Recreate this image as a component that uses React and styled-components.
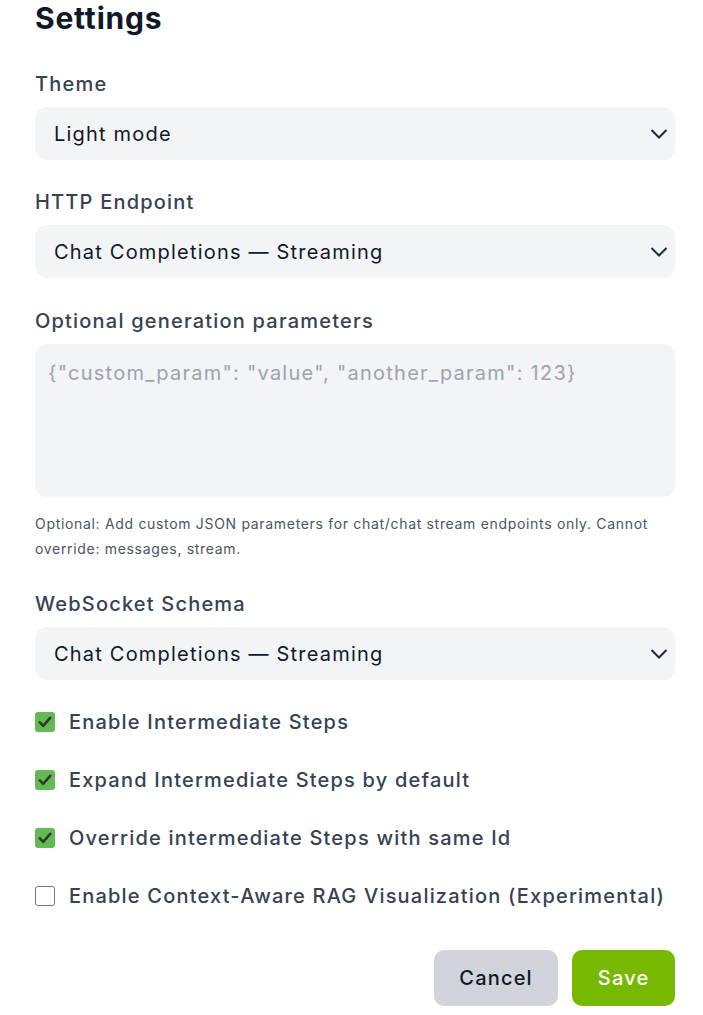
import styled, { createGlobalStyle } from "styled-components";

const GlobalStyle = createGlobalStyle`
  html, body {
    margin: 0;
    padding: 0;
    background: #ffffff;
  }
  body {
    font-family: Inter, "Noto Sans", "Liberation Sans", sans-serif;
  }
  * {
    box-sizing: border-box;
  }
`;

const Page = styled.div`
  width: 640px;
  margin-left: 35px;
  display: flex;
  flex-direction: column;
`;

const Title = styled.h1`
  margin: 0;
  font-size: 30px;
  line-height: 36px;
  font-weight: 700;
  letter-spacing: 0.8px;
  color: #111827;
`;

const Field = styled.div`
  display: flex;
  flex-direction: column;
  gap: 9px;
  margin-top: ${(p) => p.$top}px;
`;

const Label = styled.label`
  font-size: 20px;
  line-height: 28px;
  font-weight: 500;
  letter-spacing: 1.2px;
  color: #374151;
`;

const SelectWrap = styled.div`
  position: relative;
`;

const Select = styled.select`
  appearance: none;
  width: 100%;
  height: 53px;
  border: none;
  outline: none;
  border-radius: 12px;
  background: #f3f4f6;
  padding: 0 40px 0 19px;
  font-family: inherit;
  font-size: 20px;
  letter-spacing: 1.2px;
  color: #111827;
`;

const Chevron = styled.svg`
  position: absolute;
  right: 7px;
  top: 50%;
  transform: translateY(-50%);
  pointer-events: none;
`;

const TextArea = styled.textarea`
  width: 100%;
  height: 153px;
  border: none;
  outline: none;
  resize: none;
  border-radius: 12px;
  background: #f3f4f6;
  padding: 15px 13px;
  font-family: inherit;
  font-size: 20px;
  line-height: 28px;
  letter-spacing: 1.25px;
  color: #111827;

  &::placeholder {
    color: #9ca3af;
  }
`;

const Help = styled.p`
  margin: 14px 0 0;
  max-width: 630px;
  font-size: 14px;
  line-height: 25px;
  letter-spacing: 0.68px;
  color: #4b5563;
`;

const Checks = styled.div`
  display: flex;
  flex-direction: column;
  gap: 30px;
  margin-top: 28px;
`;

const CheckRow = styled.label`
  display: flex;
  align-items: center;
  gap: 14px;
  font-size: 20px;
  line-height: 28px;
  font-weight: 500;
  letter-spacing: 1.2px;
  color: #374151;
`;

const Box = styled.span`
  width: 20px;
  height: 20px;
  flex: none;
  border-radius: 3px;
  display: flex;
  align-items: center;
  justify-content: center;
  background: ${(p) => (p.$on ? "#63b954" : "#ffffff")};
  border: ${(p) => (p.$on ? "none" : "1.5px solid #767676")};
`;

const Actions = styled.div`
  display: flex;
  justify-content: flex-end;
  gap: 14px;
  margin-top: 40px;
`;

const Button = styled.button`
  height: 56px;
  padding: 0 25.5px;
  border: none;
  border-radius: 10px;
  font-family: inherit;
  font-size: 20px;
  font-weight: 500;
  letter-spacing: 1.2px;
  background: ${(p) => (p.$primary ? "#76b900" : "#d1d5db")};
  color: ${(p) => (p.$primary ? "#ffffff" : "#111827")};
`;

function Dropdown({ value }) {
  return (
    <SelectWrap>
      <Select defaultValue={value}>
        <option>{value}</option>
      </Select>
      <Chevron width="18" height="11" viewBox="0 0 18 11" fill="none">
        <path d="M1.5 1.5 L9 9 L16.5 1.5" stroke="#1f2937" strokeWidth="2" />
      </Chevron>
    </SelectWrap>
  );
}

function Check({ on, children }) {
  return (
    <CheckRow>
      <Box $on={on}>
        {on && (
          <svg width="14" height="12" viewBox="0 0 14 12" fill="none">
            <path
              d="M1.8 6.4 L5.2 9.8 L12.2 1.8"
              stroke="#2f3a2c"
              strokeWidth="2.6"
              strokeLinecap="round"
              strokeLinejoin="round"
            />
          </svg>
        )}
      </Box>
      {children}
    </CheckRow>
  );
}

export default function App() {
  return (
    <>
      <GlobalStyle />
      <Page>
        <Title>Settings</Title>

        <Field $top={34}>
          <Label>Theme</Label>
          <Dropdown value="Light mode" />
        </Field>

        <Field $top={28}>
          <Label>HTTP Endpoint</Label>
          <Dropdown value="Chat Completions — Streaming" />
        </Field>

        <Field $top={29}>
          <Label>Optional generation parameters</Label>
          <TextArea placeholder={'{"custom_param": "value", "another_param": 123}'} />
        </Field>
        <Help>
          Optional: Add custom JSON parameters for chat/chat stream endpoints only. Cannot
          override: messages, stream.
        </Help>

        <Field $top={29}>
          <Label>WebSocket Schema</Label>
          <Dropdown value="Chat Completions — Streaming" />
        </Field>

        <Checks>
          <Check on>Enable Intermediate Steps</Check>
          <Check on>Expand Intermediate Steps by default</Check>
          <Check on>Override intermediate Steps with same Id</Check>
          <Check>Enable Context-Aware RAG Visualization (Experimental)</Check>
        </Checks>

        <Actions>
          <Button>Cancel</Button>
          <Button $primary>Save</Button>
        </Actions>
      </Page>
    </>
  );
}
